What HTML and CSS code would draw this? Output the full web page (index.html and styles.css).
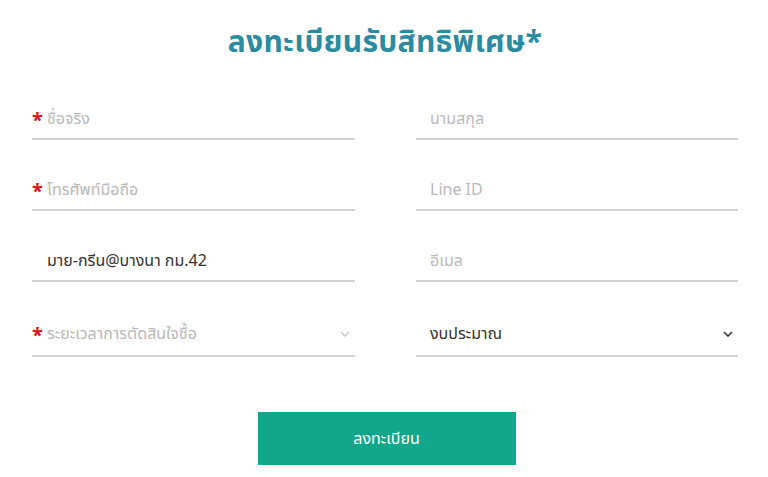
FILE: index.html
```html
<!DOCTYPE html>
<html lang="th">
<head>
<meta charset="utf-8">
<link rel="stylesheet" href="styles.css">
</head>
<body>
<div class="page">
  <h1 class="title">ลงทะเบียนรับสิทธิพิเศษ*</h1>
  <form class="form">
    <div class="field"><span class="req">*</span><span class="ph">ชื่อจริง</span></div>
    <div class="field field-right"><span class="ph">นามสกุล</span></div>
    <div class="field"><span class="req">*</span><span class="ph">โทรศัพท์มือถือ</span></div>
    <div class="field field-right"><span class="ph">Line ID</span></div>
    <div class="field"><span class="req"></span><span class="val">มาย-กรีน@บางนา กม.42</span></div>
    <div class="field field-right"><span class="ph">อีเมล</span></div>
    <div class="field select"><span class="req">*</span><span class="ph">ระยะเวลาการตัดสินใจซื้อ</span>
      <svg class="chev light" viewBox="0 0 10 6" width="10" height="6"><path d="M1 1l4 4 4-4" fill="none" stroke="currentColor" stroke-width="1.3"/></svg>
    </div>
    <div class="field field-right select"><span class="val">งบประมาณ</span>
      <svg class="chev" viewBox="0 0 10 6" width="10" height="6"><path d="M1 1l4 4 4-4" fill="none" stroke="currentColor" stroke-width="1.6"/></svg>
    </div>
  </form>
  <div class="actions">
    <button class="btn" type="button">ลงทะเบียน</button>
  </div>
</div>
</body>
</html>
```
FILE: styles.css
```css
html, body {
  margin: 0;
  padding: 0;
  background: #fff;
}
body {
  font-family: "Noto Sans Thai", "Noto Sans", "Liberation Sans", sans-serif;
  color: #333;
}
.page {
  padding: 22px 30px 0 32px;
}
.title {
  margin: 0;
  text-align: center;
  font-size: 30px;
  line-height: 42px;
  font-weight: 700;
  color: #2b8ba0;
  letter-spacing: 0.3px;
}
.form {
  display: grid;
  grid-template-columns: 323px 322px;
  column-gap: 61px;
  row-gap: 31px;
  margin-top: 36px;
}
.field {
  display: flex;
  align-items: center;
  height: 38px;
  border-bottom: 2px solid #d2d2d2;
  font-size: 16px;
}
.field-right {
  padding-left: 14px;
}
.field.select {
  height: 42px;
}
.req {
  width: 15px;
  flex: none;
  color: #e3101b;
  font-size: 20px;
  font-weight: 700;
  line-height: 1;
  padding-top: 4px;
}
.ph {
  color: #b9b9b9;
}
.val {
  color: #333;
}
.chev {
  margin-left: auto;
  margin-right: 5px;
  color: #333;
}
.chev.light {
  color: #c4c4c4;
}
.actions {
  display: flex;
  justify-content: center;
  margin-top: 55px;
}
.btn {
  width: 258px;
  height: 53px;
  border: 0;
  background: #10a78b;
  color: #fff;
  font-family: inherit;
  font-size: 16px;
  margin-left: 3px;
}
```
